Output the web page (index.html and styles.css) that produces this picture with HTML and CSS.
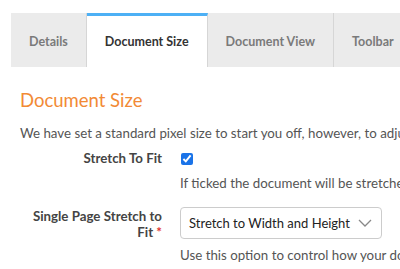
FILE: index.html
```html
<!DOCTYPE html>
<html lang="en">
<head>
  <meta charset="UTF-8">
  <title>Document Size</title>
  <meta name="viewport" content="width=device-width, initial-scale=1.0">
  <link rel="stylesheet" href="styles.css">
</head>
<body>

<div class="tabs">
  <div class="tab">Details</div>
  <div class="tab active">Document Size</div>
  <div class="tab">Document View</div>
  <div class="tab">Toolbar</div>
</div>

<div class="panel">
  <h2>Document Size</h2>
  <p class="intro">We have set a standard pixel size to start you off, however, to adjust the size of your document change the values below.</p>

  <div class="row">
    <label class="label" for="stretch">Stretch To Fit</label>
    <div class="control">
      <input type="checkbox" id="stretch" checked>
      <div class="help first">If ticked the document will be stretched to fit the available space.</div>
    </div>
  </div>

  <div class="row second">
    <label class="label" for="single">Single Page Stretch to Fit <span class="req">*</span></label>
    <div class="control">
      <div class="select" id="single">
        <span>Stretch to Width and Height</span>
        <svg width="14" height="8" viewBox="0 0 14 8"><path d="M1 1l6 6 6-6" fill="none" stroke="#888" stroke-width="1.3"/></svg>
      </div>
      <div class="help">Use this option to control how your document is stretched.</div>
    </div>
  </div>
</div>

</body>
</html>
```

FILE: styles.css
```css
body {
  margin: 0;
  font-family: Lato, "Open Sans", sans-serif;
  background: white;
  color: #555;
  overflow: hidden;
  width: 400px;
  height: 269px;
}
.tabs {
  display: flex;
  margin: 13px 0 0 11px;
  white-space: nowrap;
}
.tab {
  flex: none;
  height: 50px;
  line-height: 50px;
  padding: 4px 18px 0;
  background: #ebebeb;
  color: #7a7a7a;
  font-size: 12.5px;
  font-weight: bold;
  border-right: 1px solid #d6d6d6;
}
.tab.active {
  background: white;
  color: #333;
  border-top: 3px solid #4db0f5;
  padding-top: 1px;
}
.panel {
  padding: 0 20px;
  white-space: nowrap;
}
h2 {
  margin: 22px 0 0;
  color: #f28a35;
  font-weight: normal;
  font-size: 18.5px;
  line-height: 22px;
}
.intro {
  margin: 14px 0 0;
  font-size: 13.3px;
  line-height: 16px;
}
.row {
  display: flex;
  margin-top: 6px;
}
.row.second {
  margin-top: 16px;
}
.label {
  flex: none;
  width: 142px;
  text-align: right;
  white-space: normal;
  font-weight: bold;
  font-size: 13.3px;
  line-height: 16px;
  color: #444;
  padding-top: 3px;
}
.second .label {
  padding-top: 1px;
}
.req {
  color: #e0322d;
}
.control {
  margin-left: 18px;
}
input[type=checkbox] {
  display: block;
  margin: 6px 0 0 1px;
  width: 12px;
  height: 12px;
  accent-color: #1a73e8;
}
.help {
  font-size: 13.3px;
  line-height: 16px;
  margin-top: 8px;
}
.help.first {
  margin-top: 10px;
}
.select {
  display: flex;
  align-items: center;
  justify-content: space-between;
  box-sizing: border-box;
  width: 202px;
  height: 32px;
  padding: 0 9px 0 8px;
  border: 1px solid #ccc;
  border-radius: 4px;
  color: #222;
  font-size: 13px;
}
```
